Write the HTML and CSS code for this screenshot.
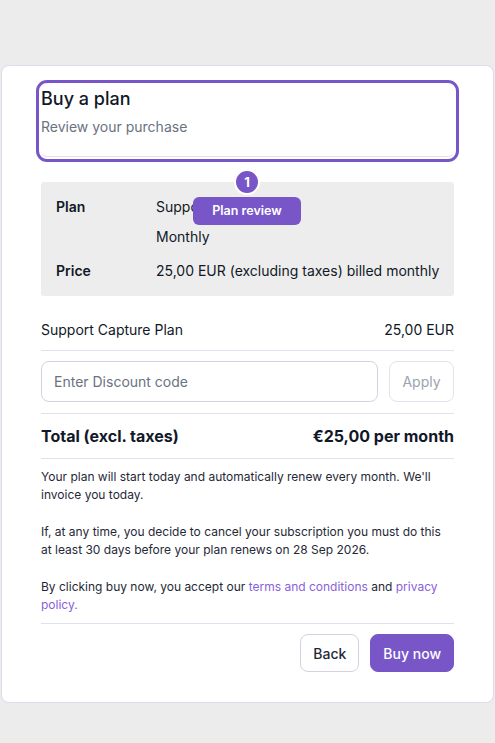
FILE: index.html
```html
<!DOCTYPE html>
<html lang="en">
<head>
  <meta charset="UTF-8">
  <meta name="viewport" content="width=device-width, initial-scale=1.0">
  <title>Buy a plan</title>
  <link rel="stylesheet" href="styles.css">
</head>
<body>
  <div class="page">
    <div class="card">
      <header class="card-head tour-focus">
        <h1>Buy a plan</h1>
        <p>Review your purchase</p>
      </header>

      <section class="summary">
        <div class="row">
          <div class="label">Plan</div>
          <div class="value">
            <div>Support Capture Plan</div>
            <div>Monthly</div>
          </div>
        </div>
        <div class="row">
          <div class="label">Price</div>
          <div class="value">
            <div>25,00 EUR (excluding taxes) billed monthly</div>
          </div>
        </div>
      </section>

      <div class="line-item">
        <span>Support Capture Plan</span>
        <span>25,00 EUR</span>
      </div>

      <form class="discount" onsubmit="return false">
        <input type="text" placeholder="Enter Discount code">
        <button type="submit" class="btn-apply">Apply</button>
      </form>

      <div class="total">
        <span>Total (excl. taxes)</span>
        <span>€25,00 per month</span>
      </div>

      <div class="notes">
        <p>Your plan will start today and automatically renew every month. We'll invoice you today.</p>
        <p>If, at any time, you decide to cancel your subscription you must do this at least 30 days before your plan renews on 28 Sep 2026.</p>
        <p>By clicking buy now, you accept our <a href="#">terms and conditions</a> and <a href="#">privacy policy.</a></p>
      </div>

      <div class="actions">
        <button class="btn btn-back">Back</button>
        <button class="btn btn-buy">Buy now</button>
      </div>

      <div class="tour-badge">1</div>
      <div class="tour-tip">Plan review</div>
    </div>
  </div>
</body>
</html>
```

FILE: styles.css
```css
body {
  margin: 0;
  background: #ececec;
  font-family: Inter, "Noto Sans", sans-serif;
  color: #111827;
}
.page {
  padding: 65px 1px 40px;
}
.card {
  position: relative;
  background: white;
  border: 1px solid #dedbef;
  border-radius: 8px;
  padding: 19px 39px 30px;
}
.card-head {
  border-bottom: 1px solid #e2e0ee;
  padding-bottom: 19px;
}
.card-head h1 {
  margin: 0;
  font-size: 18px;
  font-weight: 500;
  line-height: 28px;
}
.card-head p {
  margin: 4px 0 0;
  font-size: 14px;
  line-height: 20px;
  color: #6b7280;
}
.tour-focus {
  outline: 3px solid #7856c8;
  outline-offset: 2px;
  border-radius: 6px;
}
.summary {
  margin-top: 25px;
  background: #ededed;
  border-radius: 3px;
  padding: 15px 10px 15px 15px;
  display: flex;
  flex-direction: column;
  gap: 14px;
  font-size: 14px;
  line-height: 20px;
}
.row {
  display: flex;
}
.label {
  width: 100px;
  flex-shrink: 0;
  font-weight: 600;
}
.value {
  display: flex;
  flex-direction: column;
  gap: 10px;
  white-space: nowrap;
}
.line-item, .total {
  display: flex;
  justify-content: space-between;
  border-bottom: 1px solid #e2e0ee;
}
.line-item {
  margin-top: 24px;
  padding-bottom: 10px;
  font-size: 14px;
  line-height: 20px;
}
.discount {
  display: flex;
  gap: 11px;
  padding: 10px 0 11px;
  border-bottom: 1px solid #e2e0ee;
}
.discount input {
  flex: 1;
  height: 41px;
  box-sizing: border-box;
  border: 1px solid #d4d2e0;
  border-radius: 8px;
  padding: 0 12px;
  font-family: inherit;
  font-size: 14px;
  color: #111827;
}
.discount input::placeholder {
  color: #6b7280;
}
.btn-apply {
  width: 65px;
  height: 41px;
  background: white;
  border: 1px solid #e3e2ea;
  border-radius: 8px;
  font-family: inherit;
  font-size: 14px;
  color: #9ca3af;
}
.total {
  padding: 10px 0 10px;
  font-size: 16px;
  font-weight: 700;
  line-height: 24px;
}
.notes {
  padding: 9px 0 9px;
  border-bottom: 1px solid #e2e0ee;
}
.notes p {
  margin: 0 0 19px;
  font-size: 12px;
  line-height: 18px;
  color: #1f2937;
}
.notes p:last-child {
  margin-bottom: 0;
}
.notes a {
  color: #8a5fdb;
  text-decoration: none;
}
.actions {
  display: flex;
  justify-content: flex-end;
  gap: 11px;
  padding-top: 10px;
}
.btn {
  box-sizing: border-box;
  height: 38px;
  border-radius: 8px;
  font-family: inherit;
  font-size: 14px;
  font-weight: 500;
  padding: 0 12px;
  cursor: pointer;
}
.btn-back {
  background: white;
  border: 1px solid #d4d2e0;
  color: #1f2937;
}
.btn-buy {
  background: #7856c8;
  border: 1px solid #7856c8;
  color: white;
}
.tour-badge {
  position: absolute;
  left: 232px;
  top: 103px;
  width: 22px;
  height: 22px;
  border: 2px solid white;
  border-radius: 50%;
  background: #7856c8;
  color: white;
  font-size: 13px;
  font-weight: 700;
  line-height: 22px;
  text-align: center;
}
.tour-tip {
  position: absolute;
  left: 191px;
  top: 131px;
  width: 108px;
  height: 28px;
  border-radius: 6px;
  background: #7856c8;
  color: white;
  font-size: 12.5px;
  font-weight: 600;
  line-height: 28px;
  text-align: center;
}
```
